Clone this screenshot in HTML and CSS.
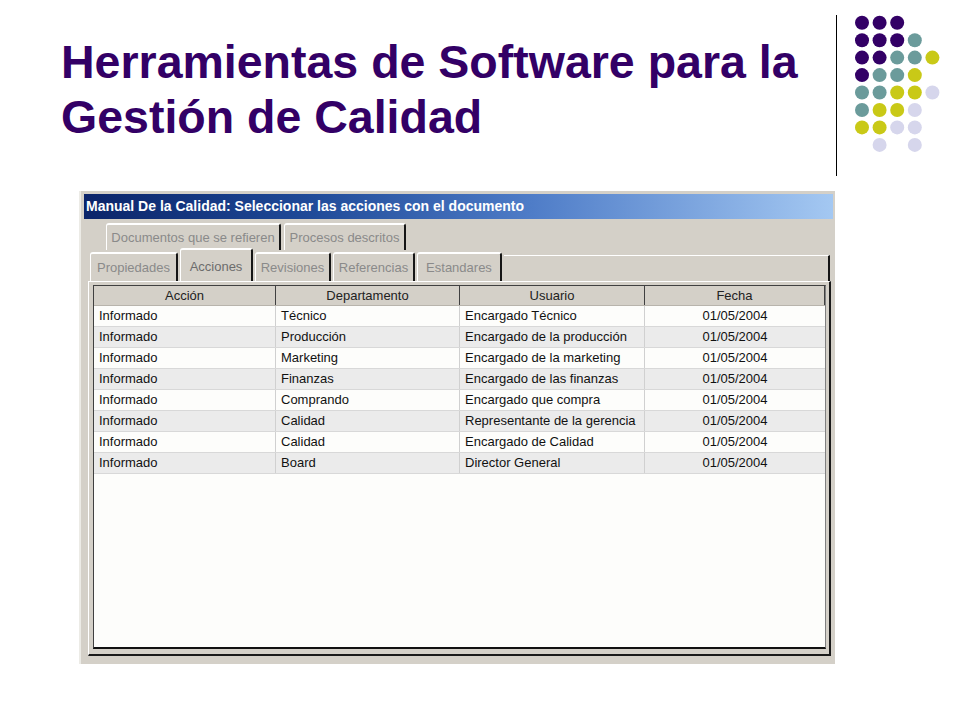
FILE: index.html
```html
<!DOCTYPE html>
<html lang="es">
<head>
  <meta charset="UTF-8">
  <title>Herramientas de Software para la Gestión de Calidad</title>
  <link rel="stylesheet" href="styles.css">
</head>
<body>
  <header class="slide-header">
    <h1 class="slide-title">Herramientas de Software para la<br>Gestión de Calidad</h1>
    <svg class="deco" width="124" height="180" viewBox="0 0 124 180">
      <line x1="0.5" y1="15" x2="0.5" y2="176" stroke="#000" stroke-width="1"/>
      <!-- fila 1 -->
      <circle cx="26" cy="22.7" r="7" fill="#330066"/>
      <circle cx="43.6" cy="22.7" r="7" fill="#330066"/>
      <circle cx="61.2" cy="22.7" r="7" fill="#330066"/>
      <!-- fila 2 -->
      <circle cx="26" cy="40.2" r="7" fill="#330066"/>
      <circle cx="43.6" cy="40.2" r="7" fill="#330066"/>
      <circle cx="61.2" cy="40.2" r="7" fill="#330066"/>
      <circle cx="78.8" cy="40.2" r="7" fill="#6b9b9b"/>
      <!-- fila 3 -->
      <circle cx="26" cy="57.6" r="7" fill="#330066"/>
      <circle cx="43.6" cy="57.6" r="7" fill="#330066"/>
      <circle cx="61.2" cy="57.6" r="7" fill="#6b9b9b"/>
      <circle cx="78.8" cy="57.6" r="7" fill="#6b9b9b"/>
      <circle cx="96.4" cy="57.6" r="7" fill="#c9c917"/>
      <!-- fila 4 -->
      <circle cx="26" cy="75.1" r="7" fill="#330066"/>
      <circle cx="43.6" cy="75.1" r="7" fill="#6b9b9b"/>
      <circle cx="61.2" cy="75.1" r="7" fill="#6b9b9b"/>
      <circle cx="78.8" cy="75.1" r="7" fill="#c9c917"/>
      <!-- fila 5 -->
      <circle cx="26" cy="92.5" r="7" fill="#6b9b9b"/>
      <circle cx="43.6" cy="92.5" r="7" fill="#6b9b9b"/>
      <circle cx="61.2" cy="92.5" r="7" fill="#c9c917"/>
      <circle cx="78.8" cy="92.5" r="7" fill="#c9c917"/>
      <circle cx="96.4" cy="92.5" r="7" fill="#d6d6ec"/>
      <!-- fila 6 -->
      <circle cx="26" cy="110" r="7" fill="#6b9b9b"/>
      <circle cx="43.6" cy="110" r="7" fill="#c9c917"/>
      <circle cx="61.2" cy="110" r="7" fill="#c9c917"/>
      <circle cx="78.8" cy="110" r="7" fill="#d6d6ec"/>
      <!-- fila 7 -->
      <circle cx="26" cy="127.4" r="7" fill="#c9c917"/>
      <circle cx="43.6" cy="127.4" r="7" fill="#c9c917"/>
      <circle cx="61.2" cy="127.4" r="7" fill="#d6d6ec"/>
      <circle cx="78.8" cy="127.4" r="7" fill="#d6d6ec"/>
      <!-- fila 8 -->
      <circle cx="43.6" cy="144.9" r="7" fill="#d6d6ec"/>
      <circle cx="78.8" cy="144.9" r="7" fill="#d6d6ec"/>
    </svg>
  </header>

  <div class="window">
    <div class="titlebar">Manual De la Calidad: Seleccionar las acciones con el documento</div>

    <div class="tabs tabs-back">
      <div class="tab">Documentos que se refieren</div>
      <div class="tab">Procesos descritos</div>
    </div>

    <div class="tabs tabs-front">
      <div class="tab">Propiedades</div>
      <div class="tab tab-active">Acciones</div>
      <div class="tab">Revisiones</div>
      <div class="tab">Referencias</div>
      <div class="tab">Estandares</div>
      <div class="tab-filler"></div>
    </div>

    <div class="tab-page">
      <div class="grid">
        <div class="grid-row grid-head">
          <div class="cell">Acción</div>
          <div class="cell">Departamento</div>
          <div class="cell">Usuario</div>
          <div class="cell">Fecha</div>
        </div>
        <div class="grid-row">
          <div class="cell">Informado</div>
          <div class="cell">Técnico</div>
          <div class="cell">Encargado Técnico</div>
          <div class="cell cell-date">01/05/2004</div>
        </div>
        <div class="grid-row">
          <div class="cell">Informado</div>
          <div class="cell">Producción</div>
          <div class="cell">Encargado de la producción</div>
          <div class="cell cell-date">01/05/2004</div>
        </div>
        <div class="grid-row">
          <div class="cell">Informado</div>
          <div class="cell">Marketing</div>
          <div class="cell">Encargado de la marketing</div>
          <div class="cell cell-date">01/05/2004</div>
        </div>
        <div class="grid-row">
          <div class="cell">Informado</div>
          <div class="cell">Finanzas</div>
          <div class="cell">Encargado de las finanzas</div>
          <div class="cell cell-date">01/05/2004</div>
        </div>
        <div class="grid-row">
          <div class="cell">Informado</div>
          <div class="cell">Comprando</div>
          <div class="cell">Encargado que compra</div>
          <div class="cell cell-date">01/05/2004</div>
        </div>
        <div class="grid-row">
          <div class="cell">Informado</div>
          <div class="cell">Calidad</div>
          <div class="cell">Representante de la gerencia</div>
          <div class="cell cell-date">01/05/2004</div>
        </div>
        <div class="grid-row">
          <div class="cell">Informado</div>
          <div class="cell">Calidad</div>
          <div class="cell">Encargado de Calidad</div>
          <div class="cell cell-date">01/05/2004</div>
        </div>
        <div class="grid-row">
          <div class="cell">Informado</div>
          <div class="cell">Board</div>
          <div class="cell">Director General</div>
          <div class="cell cell-date">01/05/2004</div>
        </div>
      </div>
    </div>
  </div>
</body>
</html>
```

FILE: styles.css
```css
* {
  margin: 0;
  padding: 0;
  box-sizing: border-box;
}

body {
  font-family: 'Liberation Sans', Arial, sans-serif;
  background: #ffffff;
  width: 960px;
  height: 720px;
  overflow: hidden;
}

/* cabecera de la diapositiva */
.slide-header {
  display: flex;
  align-items: flex-start;
}

.slide-title {
  flex: 1;
  margin-top: 35px;
  padding-left: 61px;
  font-size: 46.5px;
  line-height: 55px;
  font-weight: bold;
  color: #330066;
  white-space: nowrap;
}

.deco {
  display: block;
  flex-shrink: 0;
}

/* ventana capturada */
.window {
  margin: 11px 0 0 79px;
  width: 756px;
  height: 473px;
  padding-top: 3px;
  background: #d4d0c8;
  border-left: 2px solid #ecebe6;
}

.titlebar {
  margin: 0 2px 0 3px;
  height: 25px;
  padding-left: 2px;
  line-height: 25px;
  font-size: 14px;
  font-weight: bold;
  color: #ffffff;
  white-space: nowrap;
  background: linear-gradient(to right, #0b2469 0%, #1f4a98 30%, #4f7dc8 60%, #a4c8f2 100%);
}

.tabs {
  display: flex;
}

.tabs-back {
  margin-top: 4px;
  height: 27px;
  padding-left: 25px;
  gap: 3px;
}

.tabs-front {
  margin-top: -2px;
  height: 33px;
  padding-left: 9px;
  gap: 2px;
  align-items: flex-end;
}

.tab {
  height: 29px;
  border-top: 2px solid #ffffff;
  border-left: 1px solid #ffffff;
  border-right: 2px solid #151515;
  border-radius: 3px 3px 0 0;
  font-size: 13px;
  line-height: 27px;
  text-align: center;
  color: #8a8a8a;
  white-space: nowrap;
}

.tabs-back .tab {
  height: 27px;
  line-height: 25px;
}

.tabs-back .tab:nth-child(1) { width: 175px; }
.tabs-back .tab:nth-child(2) { width: 122px; }

.tabs-front .tab:nth-child(1) { width: 88px; }
.tabs-front .tab:nth-child(2) { width: 73px; }
.tabs-front .tab:nth-child(3) { width: 76px; }
.tabs-front .tab:nth-child(4) { width: 82px; }
.tabs-front .tab:nth-child(5) { width: 85px; }

.tab-active {
  height: 33px;
  padding-top: 2px;
  line-height: 29px;
  color: #6c6c6c;
}

.tab-filler {
  width: 326px;
  height: 26px;
  border-top: 1px solid #ffffff;
  border-right: 2px solid #151515;
}

/* página de la pestaña */
.tab-page {
  margin: 0 4px 0 7px;
  height: 375px;
  padding: 3px 3px 5px 4px;
  border-top: 1px solid #ffffff;
  border-left: 1px solid #ffffff;
  border-right: 2px solid #1a1a1a;
  border-bottom: 2px solid #1a1a1a;
}

.grid {
  height: 100%;
  background: #fdfdfb;
  border-top: 1px solid #404040;
  border-left: 1px solid #404040;
  border-right: 1px solid #808080;
  border-bottom: 2px solid #111111;
  font-size: 13px;
  color: #111111;
}

.grid-row {
  display: grid;
  grid-template-columns: 182px 184px 185px 1fr;
  height: 21px;
  border-bottom: 1px solid #d8d8d8;
  line-height: 20px;
}

.grid-row:nth-child(odd) {
  background: #ebebeb;
}

.cell {
  padding-left: 5px;
  border-right: 1px solid #d0d0d0;
  white-space: nowrap;
  overflow: hidden;
}

.cell:last-child {
  border-right: none;
}

.cell-date {
  padding-left: 0;
  text-align: center;
}

.grid-head {
  height: 20px;
  background: #d4d0c8 !important;
  border-bottom: 1px solid #b8b4ac;
  line-height: 20px;
  color: #222222;
}

.grid-head .cell {
  padding-left: 0;
  padding-top: 1px;
  line-height: 18px;
  text-align: center;
  border-right: 1px solid #404040;
}
```
